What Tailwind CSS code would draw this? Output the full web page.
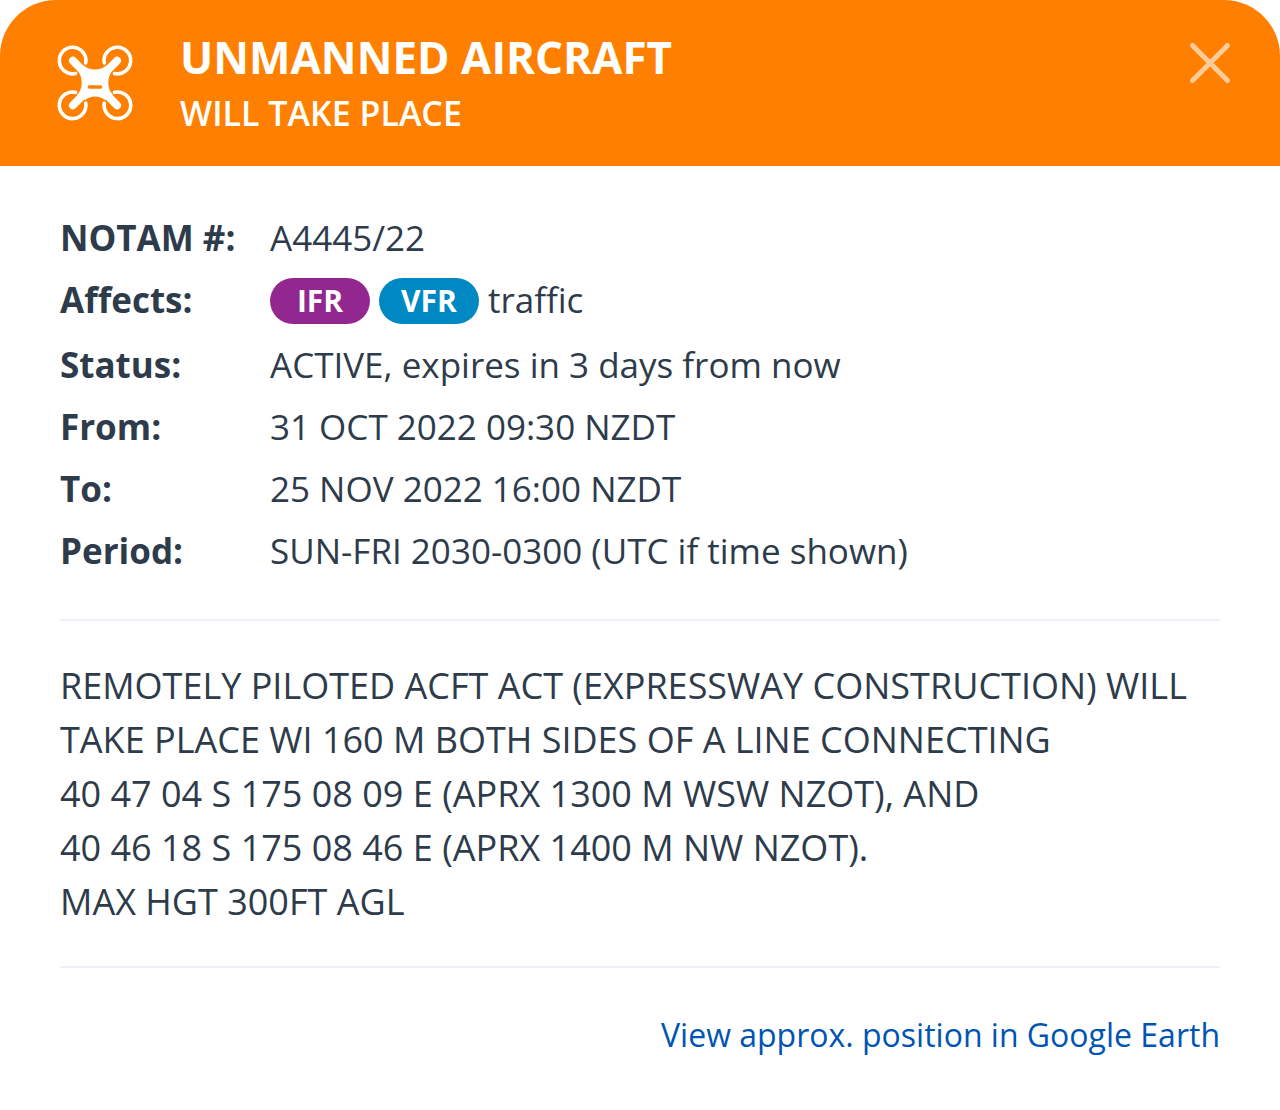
<!DOCTYPE html>
<html lang="en">
<head>
  <meta charset="UTF-8" />
  <meta name="viewport" content="width=device-width, initial-scale=1.0"/>
  <script src="https://cdn.jsdelivr.net/npm/@tailwindcss/browser@4"></script>
  <title>NOTAM A4445/22</title>
</head>
<body class="bg-white font-['Open_Sans',sans-serif] text-[#2d3b4b]">
  <div class="min-h-screen bg-white rounded-[56px] overflow-hidden">
    <header class="flex items-start bg-[#ff8000] text-white pl-[55px] pr-12 pt-[30px] pb-6">
      <svg class="w-20 h-20 mt-[13px] shrink-0" viewBox="0 0 80 80" fill="none" stroke="currentColor" stroke-width="3.6" stroke-linecap="round" aria-hidden="true">
        <path d="M20.5 30.5A13.3 13.3 0 1 1 30.7 20M49.3 20A13.3 13.3 0 1 1 59.5 30.5M59.5 49.3A13.3 13.3 0 1 1 49.3 60M30.7 60A13.3 13.3 0 1 1 20.5 49.3" />
        <path stroke-width="8" d="M18 17.700L62 62.300M62 17.700L18 62.300" />
        <path fill="currentColor" stroke="none" d="M29 22.5Q33 26.400 40 26.400Q47 26.400 51 22.500L58 27Q53.300 32 53.300 40Q53.300 47 58 52L50 57Q46 53.500 40 53.500Q34 53.500 30 57L22 52Q26.700 47 26.700 40Q26.700 32 22 27Z" />
        <path stroke="#ff8000" stroke-width="3.6" d="M34.5 44H45.5" />
      </svg>
      <div class="ml-[45px] grow">
        <h1 class="text-[44px] leading-[54px] font-bold">UNMANNED AIRCRAFT</h1>
        <p class="text-[34px] leading-[58px] font-semibold">WILL TAKE PLACE</p>
      </div>
      <button type="button" aria-label="Close" class="mt-[11px] text-white/60">
        <svg class="w-11 h-11" viewBox="0 0 44 44" fill="none" stroke="currentColor" stroke-width="5" stroke-linecap="round"><path d="M4.5 4.5L39.5 39.5M39.5 4.5L4.5 39.5" /></svg>
      </button>
    </header>
    <main class="px-[60px] pt-[41px]">
      <dl class="grid grid-cols-[210px_1fr] text-[35px] leading-[62px] pb-[37px] border-b-2 border-[#eff0f5]">
        <dt class="font-bold">NOTAM #:</dt>
        <dd>A4445/22</dd>
        <dt class="font-bold">Affects:</dt>
        <dd class="flex gap-[9px] pb-[3px]">
          <span class="mt-[9px] w-[100px] h-[46px] rounded-full bg-[#92278f] text-white text-center text-[30px] leading-[46px] font-bold">IFR</span>
          <span class="mt-[9px] w-[100px] h-[46px] rounded-full bg-[#0088c2] text-white text-center text-[30px] leading-[46px] font-bold">VFR</span>
          <span>traffic</span>
        </dd>
        <dt class="font-bold">Status:</dt>
        <dd>ACTIVE, expires in 3 days from now</dd>
        <dt class="font-bold">From:</dt>
        <dd>31 OCT 2022 09:30 NZDT</dd>
        <dt class="font-bold">To:</dt>
        <dd>25 NOV 2022 16:00 NZDT</dd>
        <dt class="font-bold">Period:</dt>
        <dd>SUN-FRI 2030-0300 (UTC if time shown)</dd>
      </dl>
      <p class="text-[36px] leading-[54px] pt-[38px] pb-[37px] border-b-2 border-[#eff0f5]">
        REMOTELY PILOTED ACFT ACT (EXPRESSWAY CONSTRUCTION) WILL TAKE PLACE WI 160 M BOTH SIDES OF A LINE CONNECTING<br>
        40 47 04 S 175 08 09 E (APRX 1300 M WSW NZOT), AND<br>
        40 46 18 S 175 08 46 E (APRX 1400 M NW NZOT).<br>
        MAX HGT 300FT AGL
      </p>
      <div class="pt-10 text-right text-[32px] leading-[54px]">
        <a href="#" class="text-[#0055b3]">View approx. position in Google Earth</a>
      </div>
    </main>
  </div>
</body>
</html>
